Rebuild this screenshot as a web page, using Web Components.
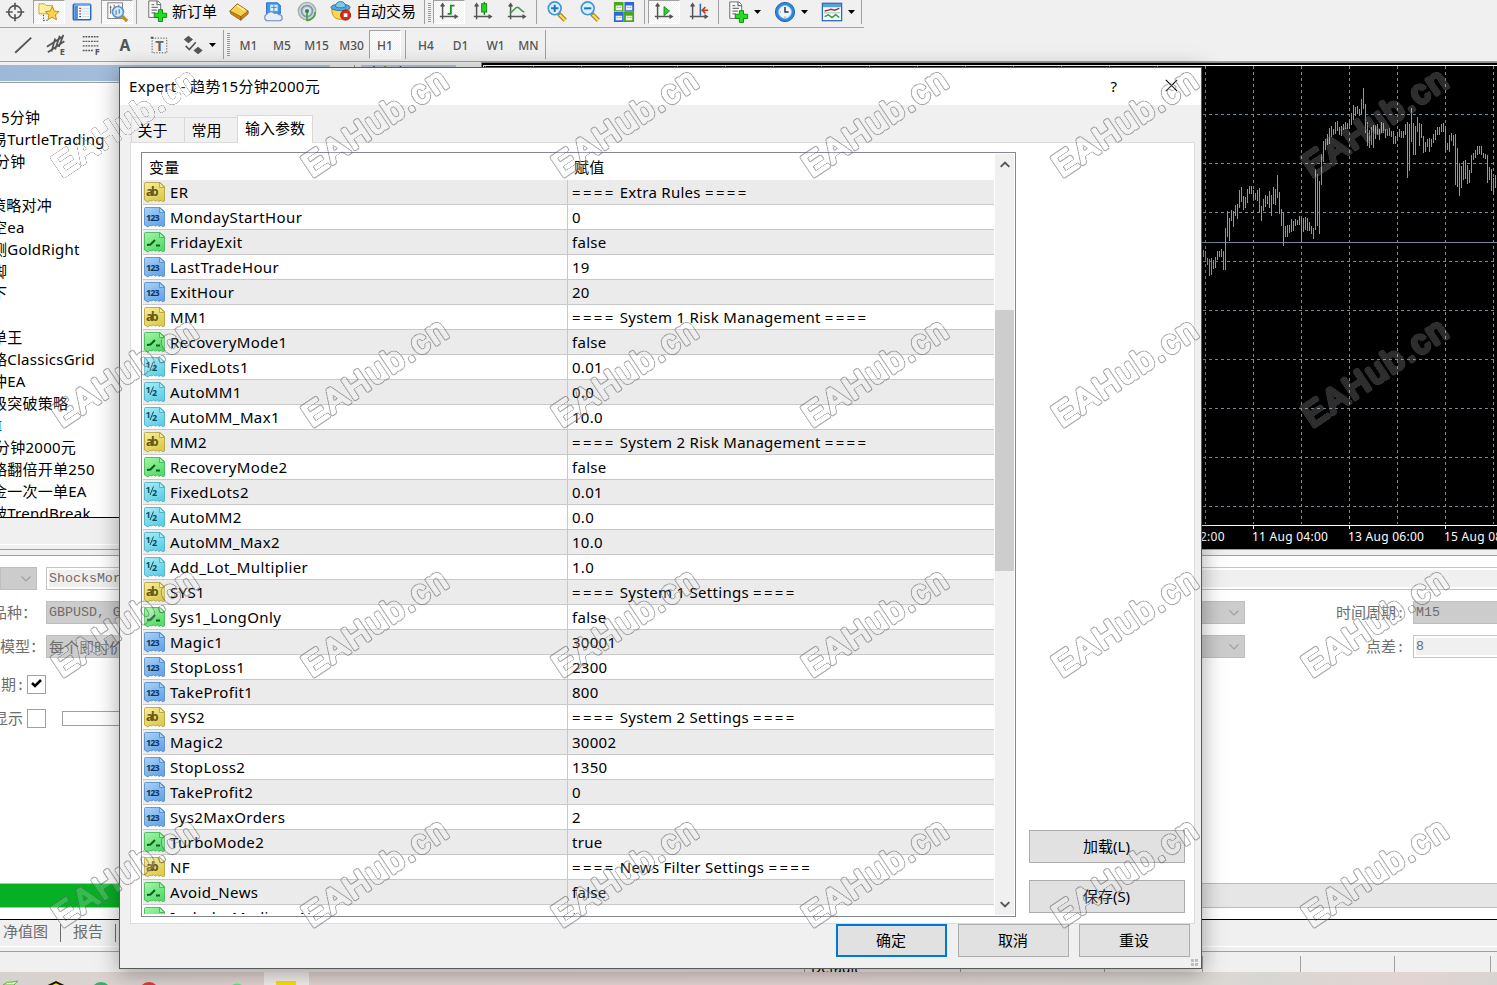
<!DOCTYPE html>
<html lang="zh-CN">
<head>
<meta charset="utf-8">
<title>Expert</title>
<style>
    html, body {
        margin: 0;
        width: 1497px;
        height: 985px;
        overflow: hidden;
    }
    body {
        background: #f0f0f0;
        font-family: "Noto Sans", "Noto Sans CJK SC", sans-serif;
        font-size: 15px;
        color: #000;
    }
</style>
</head>
<body>
<trade-terminal></trade-terminal>
<script>
const caret = '<svg width="7" height="4" viewBox="0 0 7 4"><path d="M0 0h7L3.5 4z" fill="#000"/></svg>';

const axes = '<path d="M5 3v17M2 17h19M3 6l2-3 2 3M18 15l3 2-3 2M5 15v5" fill="none" stroke="#555" stroke-width="1.6"/>';
const docPlus = `<path d="M3 1h10l3 3v15H3z" fill="#fafafa" stroke="#666"/><path d="M12 1v4h4M6 8h7M6 11h6M6 14h4M6 5h3" fill="none" stroke="#777" stroke-width="1.4"/>
    <path d="M13.5 10.500h4.500v4h4.500v4.500H18v4.500h-4.500V19H9v-4.500h4.500z" fill="#1fe01f" stroke="#0a8a0a"/>`;
const lens = (sign) => `<path d="M14 14l7 7" stroke="#a9811c" stroke-width="5"/><path d="M15 15l6 6" stroke="#ffd75e" stroke-width="2.600"/>
    <circle cx="9.500" cy="8" r="7" fill="#d9f1ff" stroke="#3f95dc" stroke-width="1.800"/><path d="${sign}" stroke="#2176b8" stroke-width="2.200"/>`;

// 24x24 glyphs of both toolbars
const ICONS = {
    cross: '<g fill="none" stroke="#555" stroke-width="1.800"><circle cx="12" cy="12" r="7"/><path d="M12 2v7.500M12 14.500V22M2 12h7.500M14.500 12H22"/></g>',
    star: '<path d="M1 3h6l2 2h7v9H1z" fill="#fff0a0" stroke="#c9a227"/><path d="M6 15v7M6 21h5" stroke="#444" stroke-dasharray="1.500 1.500"/><path d="M15.500 6l2.200 5 5.300.5-4 3.600 1.200 5.400-4.700-2.900-4.700 2.900 1.200-5.400-4-3.600 5.300-.5z" fill="#ffd24a" stroke="#b9861a"/>',
    list: '<rect x="2.500" y="3.500" width="19" height="17" rx="1" fill="#f7fbff" stroke="#2c67b5" stroke-width="1.600"/><path d="M4 4.500h17" stroke="#7db6ef" stroke-width="2"/><path d="M3.500 5h4v15h-4z" fill="#4b8ddb"/><path d="M9 8h2M9 14h2" stroke="#d33" stroke-width="1.300"/><path d="M9 11h2M9 17h2" stroke="#222"/><path d="M12 8h8M12 11h8M12 14h8M12 17h8" stroke="#c8d6e6"/>',
    search: '<rect x="2" y="2" width="16" height="17" fill="#fdfdfd" stroke="#777"/><path d="M5 5v9M4 7h2M9 4v4M14 4v3" stroke="#666"/><path d="M17 16l6 6" stroke="#c28d1d" stroke-width="3.600"/><circle cx="13" cy="12" r="6" fill="#cfe8fb" stroke="#5b93c4" stroke-width="1.800"/><path d="M11 10v5M14.500 9v5" stroke="#6d93b5" stroke-width="1.500"/>',
    order: docPlus,
    gold: '<path d="M2 11l8-8 12 8-8 9z" fill="#f7cf4d" stroke="#8d5c10"/><path d="M2 11l12 6v4L3 14zM14 17l8-6v3l-8 7z" fill="#c98718" stroke="#8d5c10" stroke-width=".8"/><path d="M10 5l8 5" stroke="#fff0a8" stroke-width="2"/>',
    cloud: '<path d="M5 2h12l3 3v9H5z" fill="#3a9af0" stroke="#1c6cc0"/><path d="M9 4h8v7H9z" fill="#d8eeff"/><path d="M10 7h6M13 4v7" stroke="#3a8ad8"/><path d="M5 21.500a4 4 0 0 1 0-7 5 4.500 0 0 1 8.500-1 4 4 0 0 1 5 1.500 3.300 3.300 0 0 1 1 6.500z" fill="#e6eef8" stroke="#7088b0" stroke-width="1.200"/>',
    signal: '<g fill="none"><circle cx="12" cy="11" r="9.500" fill="#cfd8d3" stroke="#9fb0a6" stroke-width="1.400"/><circle cx="12" cy="11" r="6" stroke="#8194b0" stroke-width="1.800"/><circle cx="12" cy="11" r="3" fill="#6f9cd0" stroke="#eef"/><path d="M12 11v10c5 0 9-4 9-9" stroke="#4ea24e" stroke-width="2"/></g><circle cx="12" cy="11" r="1.800" fill="#257a35"/>',
    auto: '<path d="M2 10h19c0 7-3 11-9.500 11S2 17 2 10z" fill="#ffd84f" stroke="#b98a12"/><ellipse cx="11.500" cy="8" rx="10.500" ry="3.600" fill="#4fa8d8" stroke="#2a7aa8"/><path d="M6 7c0-7 11-7 11 0 0 2-11 2-11 0z" fill="#7cc8ee" stroke="#2a7aa8"/><circle cx="17" cy="16.500" r="5.500" fill="#d92a1c" stroke="#a01810"/><path d="M15 14.500h4v4h-4z" fill="#fff"/>',
    bars: axes + '<path d="M14 4v11M10.500 14H14M14 5h4" fill="none" stroke="#1c8d1c" stroke-width="1.900"/>',
    candle: axes + '<path d="M13.500 1v14" stroke="#177a17" stroke-width="1.500"/><rect x="10.500" y="3" width="5.500" height="9" fill="#25d425" stroke="#128812"/>',
    line: axes + '<path d="M4 13c4-1 6-7 9-6s3 4 7 5" fill="none" stroke="#3a9a4a" stroke-width="1.700"/>',
    zoomin: lens('M5.500 8h8M9.500 4v8'),
    zoomout: lens('M5.500 8h8'),
    tiles: '<path d="M1 1h10.500v10.500H1zM11.500 11.500H23V23H11.500z" fill="#48a818"/><path d="M12.500 1H23v10.500H12.500zM1 12h10.500v11H1z" fill="#2f67d8"/><path d="M3 5h7v5H3zM14 5h7v5h-7zM3 16h7v5H3zM14 16h7v5h-7z" fill="#eef4ea"/><path d="M4 7h5M15 7h5M4 18h5M15 18h5" stroke="#9ab" stroke-dasharray="2 1"/>',
    play: axes + '<path d="M12 6l6 5-6 5z" fill="#2fcf3a" stroke="#138a1e"/>',
    shift: axes + '<path d="M13.500 3v13" stroke="#2a6c9a" stroke-width="1.700"/><path d="M22 10h-6M19 6.500L15.500 10l3.500 3.500" fill="none" stroke="#c23a12" stroke-width="1.700"/>',
    indicator: docPlus,
    clock: '<circle cx="12" cy="12" r="10.500" fill="#2f86dc" stroke="#1a5ea8"/><circle cx="12" cy="12" r="7" fill="#eef6fd" stroke="#9cc4ea"/><path d="M12 6.500V12h4" fill="none" stroke="#333" stroke-width="1.600"/><path d="M12 17v1M6.500 12h1" stroke="#666"/>',
    template: '<rect x="1.500" y="2.500" width="21" height="19" fill="#f4faff" stroke="#2d6cae" stroke-width="1.400"/><path d="M2 5h20" stroke="#58a0e4" stroke-width="3.500"/><path d="M4 11l4-1 3-1 4 1 5-2" fill="none" stroke="#a0322a" stroke-width="1.600"/><path d="M3 13h18" stroke="#9bb" /><path d="M4 17l4-2 4 3 4-3 4 3" fill="none" stroke="#2f9a3c" stroke-width="1.600"/>',
    trend: '<path d="M3.500 20.500L21 4" stroke="#555" stroke-width="2"/>',
    channel: '<path d="M1 14L18 3M2 20L20 8M6 19l4-14M10 17l5-15M14 14l5-13" stroke="#555" stroke-width="1.900"/><text x="15" y="23" font-size="10" font-weight="bold" fill="#555">E</text>',
    fibo: '<path d="M3 3h18M3 8h18M3 13h18M3 18h12" stroke="#555" stroke-width="1.400" stroke-dasharray="2 1"/><text x="16" y="23" font-size="10" font-weight="bold" fill="#555">F</text>',
    label: '<text x="12" y="19" font-size="17" font-weight="bold" text-anchor="middle" fill="#555">A</text>',
    textbox: '<rect x="4.500" y="4.500" width="16" height="16" fill="none" stroke="#555" stroke-dasharray="1.500 1.500"/><path d="M3 3h3v2H3z" fill="#555"/><text x="12.500" y="18.500" font-size="16" font-weight="bold" text-anchor="middle" fill="#666">T</text>',
    shapes: '<path d="M7 2l5 4-5 4-5-4zM17.500 14l5 4-5 4-5-4z" fill="#555"/><path d="M4 13l4 4 7-8" fill="none" stroke="#555" stroke-width="1.800"/>'
};

class ToolButton extends HTMLElement {
    constructor() {
        super();
        this.shadowObj = this.attachShadow({ mode: 'open' });
    }

    connectedCallback() {
        this.shadowObj.innerHTML = this._getTemplate();
    }

    _getTemplate() {
        const name = this.getAttribute('icon');
        const icon = name ? `<svg class="icon" width="22" height="22" viewBox="0 0 24 24">${ICONS[name]}</svg>` : '';
        return `
        <style>
            :host {
                display: flex;
                align-items: center;
                justify-content: center;
                box-sizing: border-box;
                flex: none;
                white-space: nowrap;
            }
            :host([pressed]) {
                background: repeating-conic-gradient(#fff 0 25%, #f0f0f0 0 50%) 0 0 / 2px 2px;
                border: 1px solid #fff;
                border-left-color: #a0a0a0;
                border-top-color: #a0a0a0;
            }
            .icon { flex: none; font-family: "Noto Sans", sans-serif; }
            :host([menu]) { justify-content: flex-start; padding-left: 6px; gap: 5px; }
            :host([wide]) { justify-content: flex-start; gap: 4px; line-height: 20px; padding-bottom: 2px; }
            :host([text]) { padding-top: 2px; }
        </style>
        ${icon}<slot></slot>${this.hasAttribute('menu') ? caret : ''}
        `;
    }
}
customElements.define('tool-button', ToolButton);

class ToolBar extends HTMLElement {
    constructor() {
        super();
        this.attachShadow({ mode: 'open' }).innerHTML = `
        <style>
            :host {
                display: flex;
                box-sizing: border-box;
                background: #f0f0f0;
            }
            ::slotted(i) {
                flex: none;
                background: linear-gradient(#a0a0a0, #a0a0a0) center / 1px 100% no-repeat;
            }
            ::slotted(b) {
                flex: none;
                margin: 3px 2px 2px 1px;
                background: repeating-linear-gradient(#999 0 1px, #f0f0f0 1px 2px);
            }
        </style>
        <slot></slot>`;
    }
}
customElements.define('tool-bar', ToolBar);

class ProgramList extends HTMLElement {
    constructor() {
        super();
        // [text, left shift]; long names run out of the narrow panel
        const items = [
            ['5分钟', 1], ['易TurtleTrading', -8], ['分钟', -5], ['', 0], ['策略对冲', -9], ['空ea', -8],
            ['测GoldRight', -8], ['脚', -8], ['下', -8], ['', 0], ['单王', -8], ['略ClassicsGrid', -8],
            ['冲EA', -8], ['级突破策略', -8], ['I', -3, '#0063b1'], ['分钟2000元', -5], ['略翻倍开单250', -8],
            ['金一次一单EA', -8], ['破TrendBreak', -8]
        ];
        this.attachShadow({ mode: 'open' }).innerHTML = `
        <style>
            :host { display: flex; flex-direction: column; padding-top: 3px; box-sizing: border-box; }
            .title { flex: none; width: 330px; height: 16px; background: linear-gradient(90deg, #9db8d6, #b0c8e4); }
            .list {
                flex: none;
                height: 436px;
                margin-top: 1px;
                padding-top: 23px;
                box-sizing: border-box;
                overflow: hidden;
                background: #fff;
                border-top: 1px solid #a0a0a0;
                border-bottom: 1px solid #000;
            }
            .list div { height: 22px; line-height: 22px; white-space: nowrap; letter-spacing: .25px; }
            .foot { flex: 1; margin-top: 26px; border-top: 1px solid #fff; }
        </style>
        <div class="title"></div>
        <div class="list">${items.map(([t, s, c]) => `<div style="margin-left:${s}px;color:${c || '#000'}">${t}</div>`).join('')}</div>
        <div class="foot"></div>`;
    }
}
customElements.define('program-list', ProgramList);

class PriceChart extends HTMLElement {
    constructor() {
        super();
        this.shadowObj = this.attachShadow({ mode: 'open' });
        // high/low of each bar in thirds of a pixel, a bar every 2px
        this._bars = [
            574,597,570,592,573,598,594,615,597,648,594,644,600,627,591,623,573,600,573,591,567,591,573,630,504,630,
            453,530,474,543,450,483,453,500,435,468,432,477,390,444,381,426,408,450,411,444,387,430,378,402,378,402,
            390,418,399,420,390,423,384,456,438,483,417,453,405,441,408,432,393,444,405,468,381,432,387,435,345,414,
            396,462,447,498,456,558,498,531,495,531,495,519,477,516,483,512,477,498,480,495,468,495,471,548,474,516,
            471,510,474,513,486,513,498,522,504,537,327,510,342,498,363,522,282,375,243,306,237,270,222,255,204,252,
            198,231,207,225,186,222,183,213,201,225,198,228,192,210,186,207,189,207,177,207,159,195,135,180,141,168,
            138,162,147,168,117,162,84,147,132,219,186,258,210,264,201,255,195,264,195,237,192,225,207,240,186,219,
            189,219,207,234,207,228,204,228,213,231,213,252,228,252,216,240,207,231,213,234,213,234,192,225,186,354,
            192,333,144,246,189,285,198,285,171,216,189,258,192,234,228,279,246,276,237,261,234,276,237,261,222,249,
            210,240,201,225,201,225,192,216,189,216,198,276,249,270,225,276,219,243,225,258,222,375,264,381,309,408,
            318,384,303,360,300,357,315,372,330,369,285,339,279,300,270,294,258,285,258,282,258,285,279,294,282,297,
            285,369,321,360,327,393,354,402,345,384
        ];
        this.shadowObj.innerHTML = this._getTemplate();
    }

    _getTemplate() {
        let bars = '';
        for (let i = 0; i < this._bars.length; i += 2) {
            const x = 720.5 + i;
            bars += `M${x} ${Math.round(this._bars[i] / 3) - 2}V${Math.round(this._bars[i + 1] / 3) - 2}`;
        }
        let grid = '';
        for (let x = 4.5; x < 1016; x += 48) grid += `M${x} 4V462`;
        for (let y = 52.5; y < 460; y += 49) grid += `M2 ${y}H1016`;
        const labels = [[719, '2:00'], [771, '11 Aug 04:00'], [867, '13 Aug 06:00'], [963, '15 Aug 08:00']];
        return `
        <style>
            :host { display: block; background: #000; overflow: hidden; }
            svg { display: block; }
            text { font-family: "Noto Sans", sans-serif; font-size: 12px; letter-spacing: .25px; fill: #fff; }
        </style>
        <svg width="1016" height="487" viewBox="0 0 1016 487">
            <path d="M0 .5H1016M.5 0V487" stroke="#8a8a8a"/>
            <path d="M2 3.500H1016M2.500 3V487" stroke="#fff"/>
            <path d="${grid}" fill="none" stroke="#778899" stroke-dasharray="3 3"/>
            <path d="M2 180.500H1016" stroke="#778899"/>
            <path d="${bars}" fill="none" stroke="#00ff00"/>
            <path d="M2 463.500H1016M772.500 463v4M868.500 463v4M964.500 463v4" stroke="#fff"/>
            ${labels.map(([x, t]) => `<text x="${x}" y="479">${t}</text>`).join('')}
        </svg>`;
    }
}
customElements.define('price-chart', PriceChart);

class TesterField extends HTMLElement {
    constructor() {
        super();
        this.attachShadow({ mode: 'open' }).innerHTML = `
        <style>
            :host {
                display: flex;
                align-items: center;
                justify-content: space-between;
                box-sizing: border-box;
                height: 23px;
                padding: 0 5px 0 2px;
                border: 1px solid #c4c4c4;
                background: #f0f0f0;
                box-shadow: inset 0 0 0 2px #fff;
                font: 13.300px "Liberation Mono", "Noto Sans CJK SC", monospace;
                color: #6d6d6d;
                white-space: pre;
                overflow: hidden;
            }
            :host([select]) { background: #ccc; border-color: #bfbfbf; box-shadow: none; }
            svg { display: none; }
            :host([select]) svg { display: block; }
            ::slotted(span) { font: 15px "Noto Sans CJK SC", sans-serif; }
        </style>
        <div><slot></slot></div>
        <svg width="10" height="6" viewBox="0 0 10 6"><path d="M.5.5L5 5 9.500.5" fill="none" stroke="#a0a0a0" stroke-width="1.200"/></svg>`;
    }
}
customElements.define('tester-field', TesterField);

class TesterPanel extends HTMLElement {
    constructor() {
        super();
        this.attachShadow({ mode: 'open' }).innerHTML = `
        <style>
            :host {
                display: flex;
                flex-direction: column;
                box-sizing: border-box;
                color: #6d6d6d;
            }
            .edge { flex: none; height: 5px; border-top: 1px solid #a0a0a0; border-bottom: 1px solid #a0a0a0; }
            .form { flex: 1; display: flex; flex-direction: column; gap: 11px; padding-top: 11px; background: #fff; font-family: "Liberation Mono", "Noto Sans CJK SC", monospace; }
            .row { display: flex; height: 23px; align-items: center; white-space: nowrap; flex: none; }
            .row > span { flex: none; box-sizing: border-box; line-height: 23px; padding-top: 4px; }
            .right { width: 168px; padding-right: 8px; text-align: right; }
            .grow { width: 1199px; flex: none; }
            .rest { flex: 1; }
            .check { width: 19px; height: 19px; flex: none; box-sizing: border-box; border: 1px solid #a0a0a0; background: #fff; }
            .check svg { display: block; margin: 2px 3px; }
            .thin { height: 15px; width: 500px; margin-left: 16px; box-sizing: border-box; border: 1px solid #a0a0a0; }
            .progress { margin-top: auto; height: 25px; box-sizing: border-box; border: solid #bcbcbc; border-width: 1px 0; background: linear-gradient(90deg, #06b025 700px, #e6e6e6 700px); }
            .last { flex: none; height: 11px; background: #fff; border-bottom: 1px solid #000; }
            .tabs { flex: none; display: flex; align-items: center; height: 26px; border-bottom: 1px solid #fff; }
            .tabs span { padding: 0 12px 5px 3px; }
            .tabs span + i + span { padding-left: 12px; }
            .tabs i { width: 1px; height: 18px; background: #6d6d6d; }
        </style>
        <div class="edge"></div>
        <div class="form">
            <div class="row">
                <tester-field select style="width:37px;margin-right:9px"></tester-field>
                <tester-field class="rest" style="margin-right:-10px">ShocksMorning</tester-field>
            </div>
            <div class="row">
                <span style="width:54px;margin-left:-8px">品种：</span>
                <tester-field select class="grow">GBPUSD, Great Britain Pound vs US Dollar</tester-field>
                <span class="right">时间周期:</span>
                <tester-field class="rest" select style="margin-right:-30px">M15</tester-field>
            </div>
            <div class="row">
                <span style="width:46px">模型：</span>
                <tester-field select class="grow"><span>每个即时价格</span></tester-field>
                <span class="right">点差:</span>
                <tester-field class="rest" style="margin-right:-10px">8</tester-field>
            </div>
            <div class="row" style="margin-top:4px">
                <span style="width:27px;padding-left:1px">期:</span>
                <div class="check"><svg width="11" height="11" viewBox="0 0 11 11"><path d="M1 5l3 3 6-6" fill="none" stroke="#000" stroke-width="2.600"/></svg></div>
            </div>
            <div class="row">
                <span style="width:34px;margin-left:-7px">显示</span>
                <div class="check"></div>
                <div class="thin"></div>
            </div>
            <div class="progress"></div>
        </div>
        <div class="last"></div>
        <div class="tabs"><span>净值图</span><i></i><span>报告</span><i></i></div>`;
    }
}
customElements.define('tester-panel', TesterPanel);

class StatusBar extends HTMLElement {
    constructor() {
        super();
        this.attachShadow({ mode: 'open' }).innerHTML = `
        <style>
            :host { display: flex; box-sizing: border-box; border-top: 1px solid #a0a0a0; overflow: hidden; }
            div { flex: none; box-sizing: border-box; margin-top: 4px; border-right: 1px solid #a0a0a0; padding-left: 6px; line-height: 24px; font-size: 14px; }
        </style>
        <div style="width:805px"></div><div style="width:156px">Default</div><div style="width:144px"></div>
        <div style="width:98px"></div><div style="width:98px"></div><div style="width:94px"></div><div style="width:96px"></div>`;
    }
}
customElements.define('status-bar', StatusBar);

class TaskBar extends HTMLElement {
    constructor() {
        super();
        this.attachShadow({ mode: 'open' }).innerHTML = `
        <style>
            :host { display: block; overflow: hidden; background: linear-gradient(90deg, #d6d2cf, #e2d5d2 18%, #e4d5d3 55%, #dcd8d4 78%, #d8d6d3 85%, #e2d4d2 94%, #d8d4d2); }
            svg { display: block; }
        </style>
        <svg width="400" height="13" viewBox="0 0 400 13">
            <path d="M264 0h45v13h-45z" fill="#f3efed"/>
            <path d="M276 9h20v4h-20z" fill="#ffe000"/>
            <path d="M3 13q4-4 9-3l6-1-4 4z" fill="#dff2cf" stroke="#5cb82a"/>
            <path d="M48 14l8-4 8 4z" fill="#ffe600" stroke="#111" stroke-width="2"/>
            <circle cx="101" cy="20" r="10" fill="#2cb568"/>
            <circle cx="149" cy="20" r="10" fill="#e23a34"/>
            <circle cx="237" cy="20.500" r="9" fill="#4cf083"/>
        </svg>`;
    }
}
customElements.define('task-bar', TaskBar);

class TypeIcon extends HTMLElement {
    constructor() {
        super();
        this.shadowObj = this.attachShadow({ mode: 'open' });
    }

    connectedCallback() {
        const kinds = {
            ab: ['#f7ee9a', '#dccb4e', '#b09c34', '<text x="3" y="15" font-size="12" textLength="13" fill="#66581a">ab</text>'],
            int: ['#a9d3fa', '#66a6e6', '#4f86c2', '<text x="3" y="15" font-size="9" textLength="14" fill="#0c3560">123</text>'],
            bool: ['#a4f7a4', '#52dc6c', '#3cae50', '<path d="M4 14l3.500-.5L12 9M13 14.500h4" fill="none" stroke="#0d5c1c" stroke-width="2"/>'],
            dbl: ['#a8eef8', '#5fcfe4', '#45a9bf', '<text x="2.500" y="12" font-size="9" fill="#0d4c5e">1</text><path d="M7 14l3.500-8.500" stroke="#0d4c5e"/><text x="9" y="14.500" font-size="9" fill="#0d4c5e">2</text>']
        };
        const [light, dark, edge, mark] = kinds[this.getAttribute('kind')];
        this.shadowObj.innerHTML = `
        <style>
            :host { display: block; width: 22px; height: 22px; flex: none; }
            svg { display: block; }
            text { font-family: "Noto Sans", sans-serif; font-weight: bold; }
        </style>
        <svg width="22" height="22" viewBox="0 0 22 22">
            <defs><linearGradient id="g" x2=".6" y2="1"><stop stop-color="${light}"/><stop offset="1" stop-color="${dark}"/></linearGradient></defs>
            <path d="M1.500 2.500Q1.500 1.500 2.500 1.500H17L21.500 5.500V20l-2 .8-1.500-1.600-2 1.300-1.500-1.300-2 .9-2-1.200-2 1-1.500-.6-2 1.800-2-1.200L1.500 19z" fill="url(#g)" stroke="${edge}" stroke-width=".8"/>
            ${mark}
            <path d="M16.500 1.500V6.500H21.500z" fill="${light}" stroke="${edge}" stroke-width=".8"/>
        </svg>`;
    }
}
customElements.define('type-icon', TypeIcon);

class ParamTable extends HTMLElement {
    constructor() {
        super();
        this.shadowObj = this.attachShadow({ mode: 'open' });
        this._params = [
            ['ab', 'ER', '==== Extra Rules ===='],
            ['int', 'MondayStartHour', '0'],
            ['bool', 'FridayExit', 'false'],
            ['int', 'LastTradeHour', '19'],
            ['int', 'ExitHour', '20'],
            ['ab', 'MM1', '==== System 1 Risk Management ===='],
            ['bool', 'RecoveryMode1', 'false'],
            ['dbl', 'FixedLots1', '0.01'],
            ['dbl', 'AutoMM1', '0.0'],
            ['dbl', 'AutoMM_Max1', '10.0'],
            ['ab', 'MM2', '==== System 2 Risk Management ===='],
            ['bool', 'RecoveryMode2', 'false'],
            ['dbl', 'FixedLots2', '0.01'],
            ['dbl', 'AutoMM2', '0.0'],
            ['dbl', 'AutoMM_Max2', '10.0'],
            ['dbl', 'Add_Lot_Multiplier', '1.0'],
            ['ab', 'SYS1', '==== System 1 Settings ===='],
            ['bool', 'Sys1_LongOnly', 'false'],
            ['int', 'Magic1', '30001'],
            ['int', 'StopLoss1', '2300'],
            ['int', 'TakeProfit1', '800'],
            ['ab', 'SYS2', '==== System 2 Settings ===='],
            ['int', 'Magic2', '30002'],
            ['int', 'StopLoss2', '1350'],
            ['int', 'TakeProfit2', '0'],
            ['int', 'Sys2MaxOrders', '2'],
            ['bool', 'TurboMode2', 'true'],
            ['ab', 'NF', '==== News Filter Settings ===='],
            ['bool', 'Avoid_News', 'false'],
            ['bool', 'Include_Medium_News', 'true']
        ];
        this.shadowObj.innerHTML = this._getTemplate();
    }

    _getTemplate() {
        const value = (text) => text.replace(/====/g, '<span>====</span>');
        return `
        <style>
            :host { display: flex; box-sizing: border-box; border: 1px solid #828790; background: #fff; overflow: hidden; }
            .grid { flex: none; width: 852px; box-sizing: border-box; padding-left: 1px; overflow: hidden; height: 761px; }
            .row { display: grid; grid-template-columns: 424px 1fr; height: 25px; box-sizing: border-box; line-height: 24px; border-bottom: 1px solid #c8c8c8; letter-spacing: .38px; }
            .row:nth-child(even) { background: #ebebeb; }
            .head { height: 27px; line-height: 29px; border: 0; letter-spacing: .3px; }
            .head > div { padding-left: 6px; }
            .name { display: flex; align-items: center; gap: 5px; }
            .value { border-left: 1px solid #c8c8c8; padding-left: 4px; white-space: pre; letter-spacing: .28px; }
            .value span { letter-spacing: 2.300px; }
            .bar { width: 20px; margin: 1px 0; display: flex; flex-direction: column; align-items: center; background: #f0f0f0; border-left: 1px solid #fff; box-sizing: border-box; }
            .bar svg { flex: none; margin: 7px 0; }
            .thumb { width: 19px; height: 261px; margin-top: 135px; margin-bottom: auto; background: #cdcdcd; }
        </style>
        <div class="grid">
            <div class="row head"><div>变量</div><div style="padding-left:7px">赋值</div></div>
            ${this._params.map(([kind, name, text]) => `<div class="row"><div class="name"><type-icon kind="${kind}"></type-icon>${name}</div><div class="value">${value(text)}</div></div>`).join('')}
        </div>
        <div class="bar">
            <svg width="10" height="7" viewBox="0 0 10 7"><path d="M.7 5.800L5 1.500l4.300 4.300" fill="none" stroke="#555" stroke-width="1.900"/></svg>
            <div class="thumb"></div>
            <svg width="10" height="7" viewBox="0 0 10 7"><path d="M.7 1.200L5 5.500l4.300-4.300" fill="none" stroke="#555" stroke-width="1.900"/></svg>
        </div>`;
    }
}
customElements.define('param-table', ParamTable);

class PushButton extends HTMLElement {
    constructor() {
        super();
        this.attachShadow({ mode: 'open' }).innerHTML = `
        <style>
            :host { display: flex; align-items: center; justify-content: center; box-sizing: border-box; height: 33px; border: 1px solid #adadad; background: #e1e1e1; padding: 0 1px 3px 0; }
            :host([default]) { border: 2px solid #0078d7; }
        </style>
        <slot></slot>`;
    }
}
customElements.define('push-button', PushButton);

class ExpertDialog extends HTMLElement {
    constructor() {
        super();
        this.attachShadow({ mode: 'open' }).innerHTML = `
        <style>
            :host {
                display: flex;
                flex-direction: column;
                box-sizing: border-box;
                border: 1px solid #5a5a5a;
                background: #f0f0f0;
                box-shadow: 0 4px 22px rgba(0, 0, 0, .36);
            }
            header { display: flex; align-items: center; height: 37px; padding: 0 23px 2px 9px; background: #fff; flex: none; box-sizing: border-box; }
            header span:nth-child(1) { letter-spacing: .32px; }
            header span:nth-child(2) { margin-left: auto; margin-right: 48px; }
            .tabs { display: flex; align-items: flex-end; height: 37px; padding-left: 11px; flex: none; }
            .tab { width: 53px; height: 25px; line-height: 25px; box-sizing: border-box; border: 1px solid #d9d9d9; border-bottom: 0; border-right: 0; text-align: center; padding-right: 11px; }
            .tab + .tab { padding-right: 9px; }
            .tab.on { width: 76px; height: 28px; margin-bottom: -1px; background: #fff; border-right: 1px solid #d9d9d9; padding: 0; z-index: 1; }
            .page { display: flex; flex: none; width: 1065px; height: 782px; margin-left: 10px; box-sizing: border-box; border: 1px solid #dcdcdc; background: #fff; padding: 9px 10px 0 10px; gap: 12px; }
            param-table { flex: none; width: 875px; height: 765px; }
            .side { flex: 1; display: flex; flex-direction: column; gap: 17px; padding-top: 678px; }
            .side push-button { width: 156px; margin-left: 1px; }
            footer { display: flex; justify-content: flex-end; padding-right: 11px; }
            footer push-button { width: 111px; margin-left: 11px; }
            footer push-button:last-of-type { margin-left: 10px; }
            .grip { align-self: flex-end; margin: 2px 2px 0 0; display: block; }
        </style>
        <header><span>Expert - 趋势15分钟2000元</span><span>?</span><svg width="13" height="13" viewBox="0 0 13 13"><path d="M.8.8l11.400 11.400M12.200.8L.8 12.200" stroke="#000" stroke-width="1.100"/></svg></header>
        <div class="tabs"><div class="tab">关于</div><div class="tab">常用</div><div class="tab on">输入参数</div></div>
        <div class="page">
            <param-table></param-table>
            <div class="side"><push-button>加载(L)</push-button><push-button>保存(S)</push-button></div>
        </div>
        <footer><push-button default>确定</push-button><push-button>取消</push-button><push-button>重设</push-button></footer>
        <svg class="grip" width="8" height="8"><path d="M0 0h3v3H0zM4 0h3v3H4zM0 4h3v3H0zM4 4h3v3H4z" fill="#bfbfbf"/></svg>`;
    }
}
customElements.define('expert-dialog', ExpertDialog);

class WaterMark extends HTMLElement {
    constructor() {
        super();
        let marks = '';
        for (let y = 178; y < 985; y += 250) {
            for (let x = 62; x < 1497; x += 250) {
                marks += `<text transform="translate(${x} ${y}) rotate(-33.800)">EAHub.cn</text>`;
            }
        }
        this.attachShadow({ mode: 'open' }).innerHTML = `
        <style>
            :host { display: block; pointer-events: none; }
            text { font-family: "Liberation Sans", sans-serif; font-size: 33px; letter-spacing: 2.450px; stroke: #000; stroke-width: 3; stroke-linejoin: round; }
        </style>
        <svg width="1497" height="985">
            <!-- hollow letters: grey rim, faint white inside -->
            <filter id="rim" filterUnits="userSpaceOnUse" x="0" y="0" width="1497" height="985" color-interpolation-filters="sRGB">
                <feGaussianBlur in="SourceAlpha" stdDeviation=".5" result="soft"/>
                <feComponentTransfer result="edge"><feFuncA type="table" tableValues="0 .7 1 .6 0"/></feComponentTransfer>
                <feFlood flood-color="#606060" flood-opacity=".56"/>
                <feComposite in2="edge" operator="in" result="ring"/>
                <feFlood flood-color="#fff" flood-opacity=".18"/>
                <feComposite in2="soft" operator="in"/>
                <feComposite in2="edge" operator="out"/>
                <feComposite in2="ring" operator="over"/>
            </filter>
            <g filter="url(#rim)">${marks}</g>
        </svg>`;
    }
}
customElements.define('water-mark', WaterMark);

class TradeTerminal extends HTMLElement {
    constructor() {
        super();
        const periods = [['M1', 33], ['M5', 34], ['M15', 35], ['M30', 35], ['H1', 32]];
        const longer = [['H4', 34], ['D1', 35], ['W1', 35], ['MN', 31]];
        const period = ([t, w]) => `<tool-button text style="width:${w}px" ${t === 'H1' ? 'pressed' : ''}>${t}</tool-button>`;
        this.attachShadow({ mode: 'open' }).innerHTML = `
        <style>
            :host {
                display: grid;
                grid-template-rows: 28px 34px 487px 398px 25px 13px;
                position: relative;
                width: 1497px;
                height: 985px;
                overflow: hidden;
            }
            .top { width: 864px; padding-bottom: 3px; border-bottom: 1px solid #a0a0a0; box-shadow: 0 1px #fff; }
            .second { padding: 2px 0 2px 6px; border-bottom: 1px solid #a0a0a0; font-size: 12px; font-weight: 500; color: #555; }
            .desk { display: grid; grid-template-columns: 354px 127px 1016px; }
            .market { margin-top: 3px; border-left: 1px solid #a0a0a0; padding-left: 6px; }
            .market div { width: 89px; height: 16px; padding-left: 6px; background: #b7c6d8; line-height: 16px; font-size: 15px; }
            status-bar { margin-top: 4px; }
            expert-dialog { position: absolute; left: 119px; top: 67px; width: 1083px; height: 902px; }
            water-mark { position: absolute; left: 0; top: 0; }
        </style>
        <tool-bar class="top">
            <tool-button icon="cross" style="width:30px;margin-right:3px"></tool-button>
            <tool-button icon="star" style="width:32px" pressed></tool-button>
            <tool-button icon="list" style="width:34px;margin-right:2px"></tool-button>
            <tool-button icon="search" style="width:32px" pressed></tool-button>
            <i style="width:6px"></i>
            <tool-button icon="order" style="width:83px;padding-left:7px" wide>新订单</tool-button>
            <tool-button icon="gold" style="width:34px"></tool-button>
            <tool-button icon="cloud" style="width:34px"></tool-button>
            <tool-button icon="signal" style="width:34px"></tool-button>
            <tool-button icon="auto" style="width:98px;padding-left:6px" wide>自动交易</tool-button>
            <i style="width:5px"></i><b style="width:3px"></b>
            <tool-button icon="bars" style="width:32px" pressed></tool-button>
            <tool-button icon="candle" style="width:36px"></tool-button>
            <tool-button icon="line" style="width:32px"></tool-button>
            <i style="width:7px"></i>
            <tool-button icon="zoomin" style="width:33px"></tool-button>
            <tool-button icon="zoomout" style="width:34px"></tool-button>
            <tool-button icon="tiles" style="width:34px"></tool-button>
            <i style="width:7px"></i>
            <tool-button icon="play" style="width:32px;margin-right:2px" pressed></tool-button>
            <tool-button icon="shift" style="width:34px"></tool-button>
            <i style="width:5px"></i>
            <tool-button icon="indicator" style="width:45px" menu></tool-button>
            <tool-button icon="clock" style="width:47px;padding-left:8px" menu></tool-button>
            <tool-button icon="template" style="width:46px;padding-left:8px" menu></tool-button>
            <i style="width:5px"></i>
        </tool-bar>
        <tool-bar class="second">
            <tool-button icon="trend" style="width:34px"></tool-button>
            <tool-button icon="channel" style="width:34px"></tool-button>
            <tool-button icon="fibo" style="width:34px"></tool-button>
            <tool-button icon="label" style="width:34px"></tool-button>
            <tool-button icon="textbox" style="width:34px"></tool-button>
            <tool-button icon="shapes" style="width:44px" menu></tool-button>
            <i style="width:6px"></i><b style="width:3px"></b>
            ${periods.map(period).join('')}
            <i style="width:8px"></i>
            ${longer.map(period).join('')}
            <i style="width:3px"></i>
        </tool-bar>
        <div class="desk">
            <program-list></program-list>
            <div class="market"><div>市场报价</div></div>
            <price-chart></price-chart>
        </div>
        <tester-panel></tester-panel>
        <status-bar></status-bar>
        <task-bar></task-bar>
        <expert-dialog></expert-dialog>
        <water-mark></water-mark>`;
    }
}
customElements.define('trade-terminal', TradeTerminal);
</script>
</body>
</html>
